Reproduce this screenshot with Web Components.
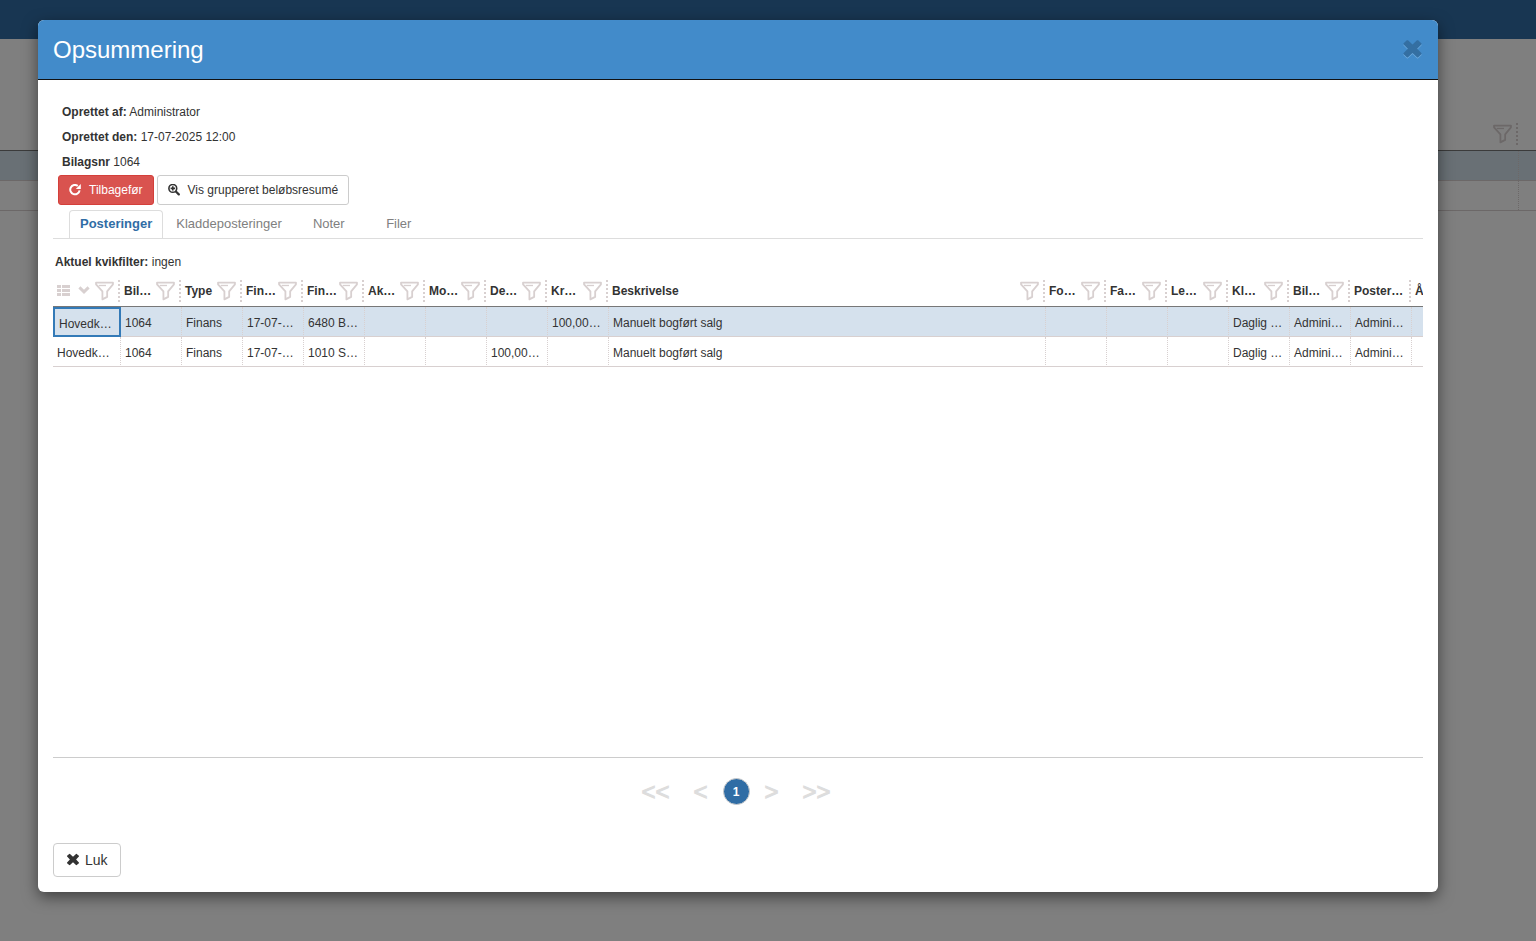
<!DOCTYPE html>
<html lang="da">
<head>
<meta charset="utf-8">
<title>Opsummering</title>
<style>
  body {
    margin: 0;
    font-family: "Liberation Sans", Arial, sans-serif;
    font-size: 12px;
    line-height: 18px;
    color: #333;
    background: #fff;
  }
</style>
</head>
<body>
<app-page></app-page>
<app-dialog heading="Opsummering">
  <posting-info></posting-info>
  <tab-bar></tab-bar>
  <posting-grid></posting-grid>
  <page-nav></page-nav>
  <app-button slot="footer" size="large" icon="remove">Luk</app-button>
</app-dialog>

<script>
const icons = {
  remove: '<svg viewBox="0 0 14 14"><path fill="currentColor" d="M4 .9 7 3.7 10 .9Q10.4.6 10.8.9L11.6 1.7 12.9 2.8Q13.3 3.2 12.9 3.6L10.1 6.5 12.9 9.4Q13.3 9.8 12.9 10.2L10.8 12.1Q10.4 12.4 10 12.1L7 9.3 4 12.1Q3.6 12.4 3.2 12.1L1.1 10.2Q.7 9.8 1.1 9.4L3.9 6.5 1.1 3.6Q.7 3.2 1.1 2.8L3.2.9Q3.6.6 4 .9Z"/></svg>',
  repeat: '<svg viewBox="0 0 12 12"><path fill="none" stroke="currentColor" stroke-width="2" d="M8.8 1.9A4.7 4.7 0 1 0 10.6 6.4"/><path fill="currentColor" d="M11.8 0V5H6.8Z"/></svg>',
  zoom: '<svg viewBox="0 0 12 12"><circle cx="4.8" cy="4.4" r="3.9" fill="none" stroke="currentColor" stroke-width="1.6"/><path fill="none" stroke="currentColor" stroke-width="1.6" d="M4.8 2.2V6.6M2.6 4.4H7"/><path stroke="currentColor" stroke-width="2.2" stroke-linecap="round" d="M8.1 7.7 10.8 10.4"/></svg>',
  list: '<svg viewBox="0 0 13 12"><path fill="currentColor" d="M0 0H4V3H0ZM5 0H13V3H5ZM0 4H4V7H0ZM5 4H13V7H5ZM0 8H4V11H0ZM5 8H13V11H5Z"/></svg>',
  down: '<svg viewBox="0 0 12 12"><path fill="none" stroke="currentColor" stroke-width="3" d="M1.4 2.4 6 6.8 10.6 2.4"/></svg>',
  filter: '<svg viewBox="0 0 20 20"><path fill="none" stroke="currentColor" stroke-width="1.9" stroke-linejoin="round" d="M1.1 1.1H18.9V3L12.8 10.4V16.2L7.8 18.8V10.4L1.1 3Z"/><path fill="none" stroke="currentColor" stroke-width="1.4" d="M4 4.2H11.6"/></svg>'
};

class AppIcon extends HTMLElement {
  constructor() {
    super();
    this.attachShadow({mode: 'open'});
  }

  connectedCallback() {
    this.shadowRoot.innerHTML = `
    <style>
      :host { display: inline-block; width: 12px; height: 12px; flex: none; }
      svg { display: block; width: 100%; height: 100%; }
    </style>
    ${icons[this.getAttribute('name')]}`;
  }
}

class AppButton extends HTMLElement {
  constructor() {
    super();
    this.attachShadow({mode: 'open'});
  }

  connectedCallback() {
    this.shadowRoot.innerHTML = `
    <style>
      :host { display: inline-block; }
      button {
        display: flex;
        align-items: center;
        gap: 8px;
        box-sizing: border-box;
        height: 30px;
        padding: 0 10px;
        border: 1px solid #ccc;
        border-radius: 3px;
        background: #fff;
        color: #333;
        font: 12px/18px "Liberation Sans", Arial, sans-serif;
        white-space: nowrap;
        cursor: pointer;
      }
      :host([kind="danger"]) button {
        color: #fff;
        background: #d9534f;
        border-color: #d43f3a;
      }
      :host([size="large"]) button {
        gap: 5px;
        height: 34px;
        padding: 0 12px;
        border-radius: 4px;
        font-size: 14px;
      }
      :host([size="large"]) app-icon { width: 14px; height: 14px; }
    </style>
    <button type="button"><app-icon name="${this.getAttribute('icon')}"></app-icon><slot></slot></button>`;
  }
}

/* The page behind the dialog */
class AppPage extends HTMLElement {
  constructor() {
    super();
    this.attachShadow({mode: 'open'}).innerHTML = `
    <style>
      :host { display: block; min-height: 100vh; }
      nav { height: 39px; background: #306da5; }
      .head {
        display: flex;
        justify-content: flex-end;
        align-items: flex-end;
        gap: 4px;
        height: 111px;
        padding: 0 18px 5px 0;
        box-sizing: border-box;
        color: #d8d0d0;
      }
      .head app-icon { width: 19px; height: 22px; }
      .grip { height: 22px; border-right: 2px dotted #d8d0d0; }
      .row {
        display: flex;
        justify-content: flex-end;
        height: 29px;
        border-bottom: 1px solid #d8d0d0;
      }
      .row span { width: 17px; border-left: 1px dotted #d8d0d0; }
      .selected { background: #d3e1eb; border-top: 1px solid #777; }
    </style>
    <nav></nav>
    <div class="head"><app-icon name="filter"></app-icon><span class="grip"></span></div>
    <div class="row selected"><span></span></div>
    <div class="row"><span></span></div>`;
  }
}

class AppDialog extends HTMLElement {
  constructor() {
    super();
    this.attachShadow({mode: 'open'});
  }

  connectedCallback() {
    this.shadowRoot.innerHTML = `
    <style>
      :host {
        position: absolute;
        inset: 0;
        display: flex;
        box-sizing: border-box;
        min-height: 100vh;
        padding: 20px 98px 49px 38px;
        background: rgba(0, 0, 0, .5);
      }
      section {
        display: flex;
        flex-direction: column;
        flex: 1;
        min-width: 0;
        background: #fff;
        border-radius: 6px;
        box-shadow: 0 5px 15px rgba(0, 0, 0, .5);
        overflow: hidden;
      }
      header {
        display: flex;
        align-items: center;
        justify-content: space-between;
        height: 59px;
        padding: 0 15px;
        background: #428bca;
        border-bottom: 1px solid #111;
      }
      h1 { margin: 0; font-size: 24px; line-height: 26px; font-weight: normal; color: #fff; }
      .close { padding: 0; border: 0; background: none; color: #346fa2; cursor: pointer; }
      .close app-icon { display: block; width: 21px; height: 21px; filter: drop-shadow(0 1px 0 #6fabde); }
      .body { display: flex; flex-direction: column; flex: 1; padding: 20px 15px 0; }
      footer { padding: 0 15px 15px; }
    </style>
    <section role="dialog" aria-labelledby="heading">
      <header>
        <h1 id="heading">${this.getAttribute('heading')}</h1>
        <button class="close" type="button" aria-label="Luk"><app-icon name="remove"></app-icon></button>
      </header>
      <div class="body"><slot></slot></div>
      <footer><slot name="footer"></slot></footer>
    </section>`;
  }
}

class PostingInfo extends HTMLElement {
  constructor() {
    super();
    this.attachShadow({mode: 'open'}).innerHTML = `
    <style>
      :host { display: block; padding-left: 5px; }
      p { margin: 0; padding-left: 4px; line-height: 25px; }
      .actions { display: flex; gap: 3px; }
    </style>
    <p><b>Oprettet af:</b> Administrator</p>
    <p><b>Oprettet den:</b> 17-07-2025 12:00</p>
    <p><b>Bilagsnr</b> 1064</p>
    <div class="actions">
      <app-button kind="danger" icon="repeat">Tilbagefør</app-button>
      <app-button icon="zoom">Vis grupperet beløbsresumé</app-button>
    </div>`;
  }
}

class TabBar extends HTMLElement {
  constructor() {
    super();
    this.attachShadow({mode: 'open'}).innerHTML = `
    <style>
      :host { display: block; margin-top: 5px; }
      nav {
        display: flex;
        gap: 2px;
        padding-left: 16px;
        border-bottom: 1px solid #ddd;
      }
      a {
        box-sizing: border-box;
        min-width: 68px;
        height: 28px;
        padding: 0 10px;
        border: 1px solid transparent;
        border-bottom: 0;
        border-radius: 4px 4px 0 0;
        font-size: 13px;
        line-height: 26px;
        text-align: center;
        text-decoration: none;
        color: #808080;
      }
      a.active {
        border-color: #ddd;
        background: #fff;
        font-weight: bold;
        color: #306da5;
      }
    </style>
    <nav>
      <a class="active" href="#posteringer">Posteringer</a>
      <a href="#kladde">Kladdeposteringer</a>
      <a href="#noter">Noter</a>
      <a href="#filer">Filer</a>
    </nav>`;
  }
}

const columns = ['', 'Bil…', 'Type', 'Fin…', 'Fin…', 'Ak…', 'Mo…', 'De…', 'Kr…', 'Beskrivelse',
  'Fo…', 'Fa…', 'Le…', 'Kl…', 'Bil…', 'Poster…', 'Å'];

const postings = [
  ['Hovedk…', '1064', 'Finans', '17-07-…', '6480 B…', '', '', '', '100,00…', 'Manuelt bogført salg',
    '', '', '', 'Daglig …', 'Admini…', 'Admini…', ''],
  ['Hovedk…', '1064', 'Finans', '17-07-…', '1010 S…', '', '', '100,00…', '', 'Manuelt bogført salg',
    '', '', '', 'Daglig …', 'Admini…', 'Admini…', '']
];

class PostingGrid extends HTMLElement {
  constructor() {
    super();
    this.attachShadow({mode: 'open'});
  }

  connectedCallback() {
    this.render();
  }

  header(name, i) {
    const tools = i === 0 ? '<app-icon class="list" name="list"></app-icon><app-icon class="down" name="down"></app-icon>' : '';
    const filter = i < 15 ? '<app-icon class="filter" name="filter"></app-icon>' : '';
    return `<th scope="col"><div class="head">${tools}<span class="name">${name}</span>${filter}<span class="grip"></span></div></th>`;
  }

  render() {
    this.shadowRoot.innerHTML = `
    <style>
      :host {
        display: block;
        flex: 1;
        border-bottom: 1px solid #ccc;
        overflow: hidden;
      }
      p { margin: 14px 0 5px 2px; }
      /* the last column runs out past the right edge */
      table {
        width: calc(100% + 50px);
        table-layout: fixed;
        border-collapse: separate;
        border-spacing: 0;
      }
      col { width: 61px; }
      col.first { width: 68px; }
      col.wide { width: auto; }
      th, td { box-sizing: border-box; height: 30px; padding: 0; text-align: left; white-space: nowrap; overflow: hidden; }
      th { height: 31px; border-bottom: 1px solid #777; }
      .head { display: flex; align-items: center; padding: 0 1px 0 3px; color: #d8d0d0; }
      .name { flex: 1; color: #333; }
      .list { width: 13px; margin-left: 1px; }
      .down { margin-left: 8px; }
      .filter { width: 19px; height: 20px; margin-right: 4px; }
      .grip { height: 22px; border-right: 2px dotted #d8d0d0; }
      td {
        padding: 2px 0 0 4px;
        border-right: 1px dotted #d8d0d0;
        border-bottom: 1px solid #d8d0d0;
      }
      tr.selected td { background: #d5e1ed; }
      tr.selected td.current { padding: 4px 0 0 4px; border: 2px solid #337ab7; }
    </style>
    <p><b>Aktuel kvikfilter:</b> ingen</p>
    <table>
      <colgroup>${columns.map((c, i) => `<col class="${i === 0 ? 'first' : i === 9 ? 'wide' : ''}">`).join('')}</colgroup>
      <thead><tr>${columns.map((c, i) => this.header(c, i)).join('')}</tr></thead>
      <tbody>
        ${postings.map((row, r) => `<tr class="${r === 0 ? 'selected' : ''}">${row.map((text, i) =>
          `<td class="${r === 0 && i === 0 ? 'current' : ''}">${text}</td>`).join('')}</tr>`).join('')}
      </tbody>
    </table>`;
  }
}

class PageNav extends HTMLElement {
  constructor() {
    super();
    this.attachShadow({mode: 'open'}).innerHTML = `
    <style>
      :host { display: block; padding: 20px 4px 38px 0; }
      nav { display: flex; justify-content: center; align-items: center; gap: 15px; }
      div { display: flex; gap: 24px; }
      button {
        padding: 0;
        border: 0;
        background: none;
        color: #ddd;
        font: 24px/27px "Liberation Sans", Arial, sans-serif;
        -webkit-text-stroke: 1px #ddd;
      }
      .current {
        width: 27px;
        height: 27px;
        border: 1px solid #ccc;
        border-radius: 50%;
        background: #306da5;
        color: #fff;
        font-size: 12px;
        font-weight: bold;
        line-height: 24px;
        -webkit-text-stroke: 0;
      }
    </style>
    <nav>
      <div><button type="button">&lt;&lt;</button><button type="button">&lt;</button></div>
      <button type="button" class="current">1</button>
      <div><button type="button">&gt;</button><button type="button">&gt;&gt;</button></div>
    </nav>`;
  }
}

customElements.define('app-icon', AppIcon);
customElements.define('app-button', AppButton);
customElements.define('app-page', AppPage);
customElements.define('app-dialog', AppDialog);
customElements.define('posting-info', PostingInfo);
customElements.define('tab-bar', TabBar);
customElements.define('posting-grid', PostingGrid);
customElements.define('page-nav', PageNav);
</script>
</body>
</html>
